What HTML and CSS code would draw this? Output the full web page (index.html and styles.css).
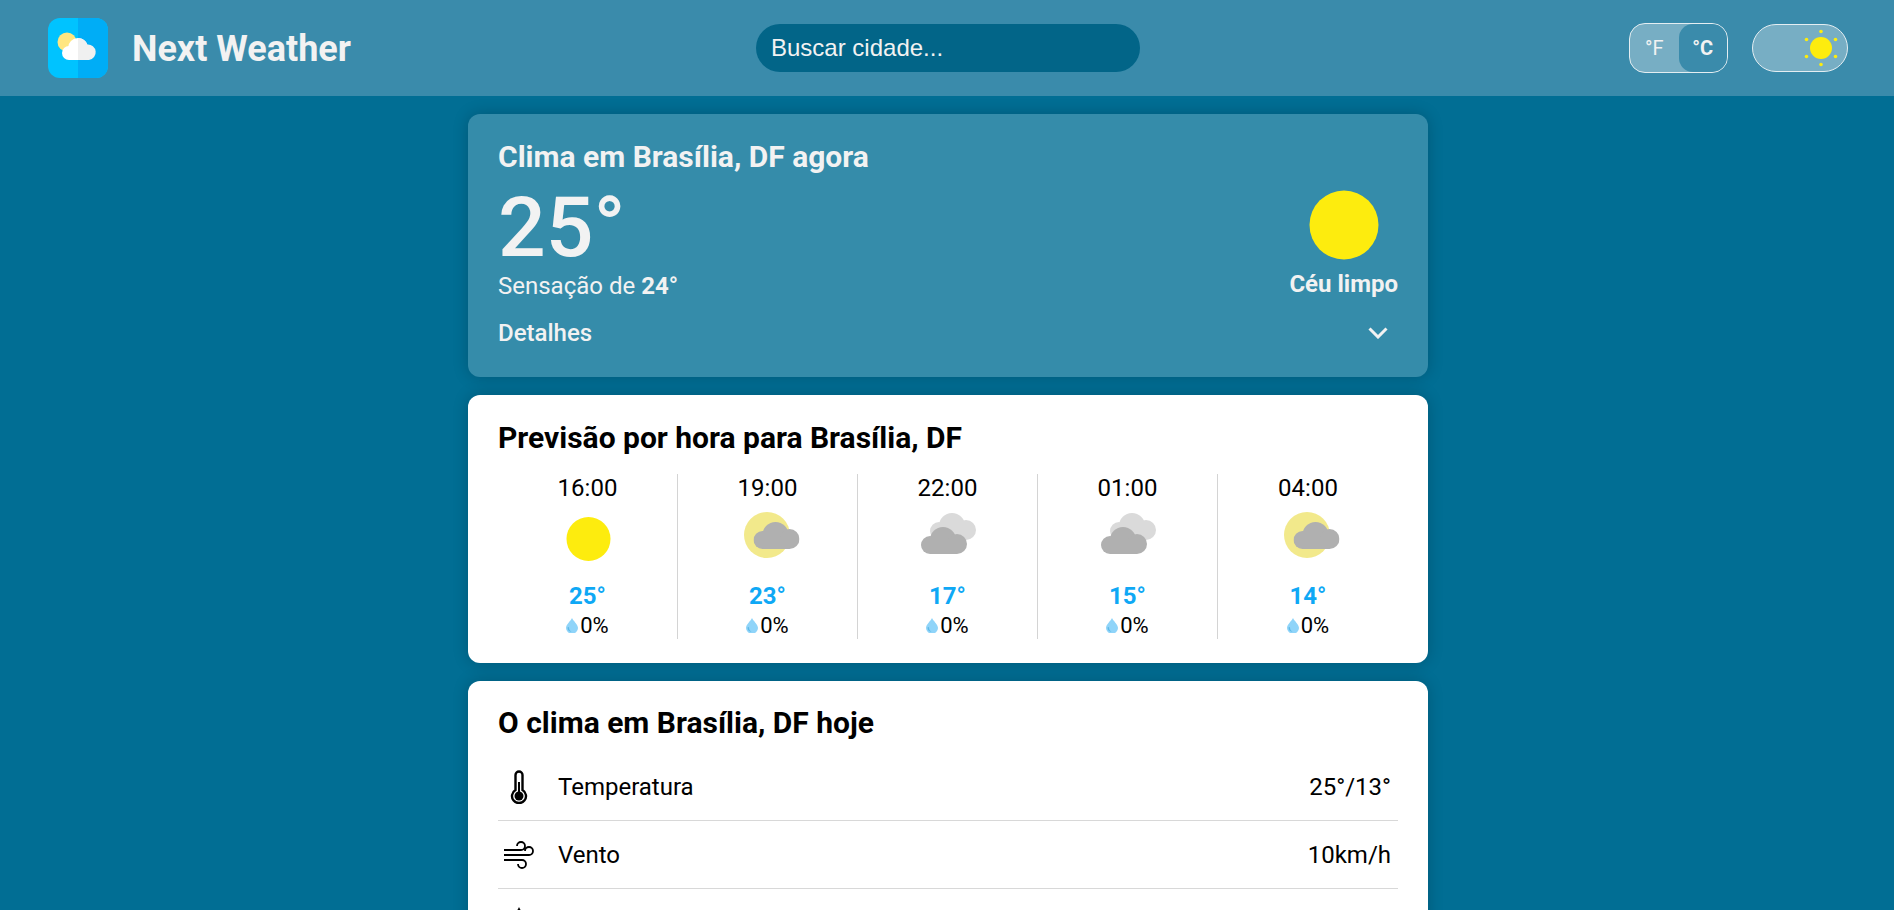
FILE: index.html
```html
<!DOCTYPE html>

<html>
<head>
<title>Next Weather</title>
<meta charset="utf-8">
<link rel="stylesheet" href="styles.css">
</head>

<body>
	<svg class="defs" width="0" height="0">
		<symbol id="cloud" viewBox="0 0 46 27">
			<circle cx="9" cy="18" r="9"/>
			<circle cx="22" cy="13" r="13"/>
			<circle cx="36" cy="17" r="10"/>
			<rect x="9" y="15" width="27" height="12"/>
		</symbol>
		<symbol id="partly" viewBox="0 0 64 64">
			<circle cx="31" cy="28" r="23" fill="#f2e98b"/>
			<use href="#cloud" x="17.500" y="15" width="46" height="27" fill="#b0b0b0"/>
		</symbol>
		<symbol id="cloudy" viewBox="0 0 64 64">
			<use href="#cloud" x="14" y="6" width="46" height="27" fill="#dadada"/>
			<use href="#cloud" x="5" y="20" width="46" height="27" fill="#b0b0b0"/>
		</symbol>
		<symbol id="drop" viewBox="0 0 12 15">
			<path d="M6 0C5 2.500 0 6.500 0 10a6 5.500 0 0 0 12 0C12 6.500 7 2.500 6 0z" fill="#8fd4f9"/>
			<path d="M1.500 9.500c0 3 2 4 4 4.200C3.500 12.500 3 11 3 9z" fill="#5fb9e6"/>
		</symbol>
	</svg>

	<header class="topbar">
		<div class="brand">
			<svg class="logo" viewBox="0 0 60 60">
				<rect width="60" height="60" rx="12" fill="#00c3ff"/>
				<path d="M30 0h18a12 12 0 0 1 12 12v36a12 12 0 0 1-12 12H30z" fill="#00adf6"/>
				<circle cx="19" cy="24" r="9.500" fill="#ffe680"/>
				<g fill="#fff">
					<circle cx="21" cy="35" r="7"/>
					<circle cx="30" cy="30" r="10"/>
					<rect x="21" y="33" width="11" height="9"/>
				</g>
				<path d="M30 20a10 10 0 0 1 9.300 6.500A7.800 7.800 0 0 1 41 42H30z" fill="#f0f0f0"/>
			</svg>
			<span class="brand-name">Next Weather</span>
		</div>
		<input class="search" type="text" placeholder="Buscar cidade...">
		<div class="controls">
			<div class="units">
				<span class="unit">°F</span>
				<span class="unit unit-on">°C</span>
			</div>
			<div class="theme">
				<svg class="theme-sun" viewBox="0 0 40 40">
					<circle cx="20" cy="20" r="11" fill="#fdec0e"/>
					<g fill="#fdec0e">
						<circle cx="20" cy="3.500" r="1.800"/>
						<circle cx="20" cy="36.500" r="1.800"/>
						<circle cx="5.500" cy="11.500" r="1.800"/>
						<circle cx="34.500" cy="11.500" r="1.800"/>
						<circle cx="5.500" cy="28.500" r="1.800"/>
						<circle cx="34.500" cy="28.500" r="1.800"/>
					</g>
				</svg>
			</div>
		</div>
	</header>

	<main class="content">
		<section class="card card-now">
			<h2 class="card-title">Clima em Brasília, DF agora</h2>
			<div class="now-body">
				<div>
					<div class="now-temp">25°</div>
					<div class="now-feels">Sensação de <b>24°</b></div>
				</div>
				<div class="now-sky">
					<svg class="now-sun" viewBox="0 0 70 70"><circle cx="35" cy="35" r="34.500" fill="#fdec0e"/></svg>
					<span>Céu limpo</span>
				</div>
			</div>
			<div class="now-details">
				<span>Detalhes</span>
				<svg class="chevron" viewBox="0 0 20 12"><path d="M1.500 1.500L10 10l8.500-8.500" fill="none" stroke="#f2f2f2" stroke-width="3"/></svg>
			</div>
		</section>

		<section class="card">
			<h2 class="card-title">Previsão por hora para Brasília, DF</h2>
			<div class="hours">
				<div class="hour">
					<div class="hour-time">16:00</div>
					<svg class="hour-icon" viewBox="0 0 64 64"><circle cx="32.500" cy="32" r="22" fill="#fdec0e"/></svg>
					<div class="hour-temp">25°</div>
					<div class="hour-rain"><svg class="drop"><use href="#drop"/></svg>0%</div>
				</div>
				<div class="hour">
					<div class="hour-time">19:00</div>
					<svg class="hour-icon"><use href="#partly"/></svg>
					<div class="hour-temp">23°</div>
					<div class="hour-rain"><svg class="drop"><use href="#drop"/></svg>0%</div>
				</div>
				<div class="hour">
					<div class="hour-time">22:00</div>
					<svg class="hour-icon"><use href="#cloudy"/></svg>
					<div class="hour-temp">17°</div>
					<div class="hour-rain"><svg class="drop"><use href="#drop"/></svg>0%</div>
				</div>
				<div class="hour">
					<div class="hour-time">01:00</div>
					<svg class="hour-icon"><use href="#cloudy"/></svg>
					<div class="hour-temp">15°</div>
					<div class="hour-rain"><svg class="drop"><use href="#drop"/></svg>0%</div>
				</div>
				<div class="hour">
					<div class="hour-time">04:00</div>
					<svg class="hour-icon"><use href="#partly"/></svg>
					<div class="hour-temp">14°</div>
					<div class="hour-rain"><svg class="drop"><use href="#drop"/></svg>0%</div>
				</div>
			</div>
		</section>

		<section class="card card-today">
			<h2 class="card-title">O clima em Brasília, DF hoje</h2>
			<div class="today">
				<div class="row">
					<svg class="row-icon" viewBox="0 0 30 34">
						<path d="M11.500 20V5a3.500 3.500 0 0 1 7 0v15a7 7 0 1 1-7 0z" fill="none" stroke="#000" stroke-width="2.400"/>
						<circle cx="15" cy="26" r="4.500"/>
						<rect x="14" y="12" width="2" height="11"/>
					</svg>
					<span class="row-label">Temperatura</span>
					<span class="row-value">25°/13°</span>
				</div>
				<div class="row">
					<svg class="row-icon" viewBox="0 0 30 34">
						<path d="M0 12h17a4 4 0 1 0-4-4M0 17h25a4 4 0 1 0-4-4M0 22h18a4 4 0 1 1-4 4" fill="none" stroke="#000" stroke-width="1.800"/>
					</svg>
					<span class="row-label">Vento</span>
					<span class="row-value">10km/h</span>
				</div>
				<div class="row">
					<svg class="row-icon" viewBox="0 0 30 34">
						<path d="M15 1C13 6 6 12 6 20a9 9 0 0 0 18 0C24 12 17 6 15 1z"/>
					</svg>
				</div>
			</div>
		</section>
	</main>
</body>

</html>
```

FILE: styles.css
```css
html, body
{
	height: 100%;
}

body
{
	margin: 0;
	overflow: hidden;
	background-color: #016e94;
	font-family: Roboto, sans-serif;
	color: #000;
}

.defs
{
	position: absolute;
}

/* top bar */
.topbar
{
	height: 96px;
	padding: 0 46px 0 48px;
	display: grid;
	grid-template-columns: 1fr 384px 1fr;
	align-items: center;
	background-color: #3a8bab;
}

.brand
{
	display: flex;
	align-items: center;
	gap: 24px;
}

.logo
{
	width: 60px;
	height: 60px;
}

.brand-name
{
	margin-top: 2px;
	font-size: 36px;
	font-weight: 700;
	color: #f2f2f2;
}

.search
{
	box-sizing: border-box;
	width: 384px;
	height: 48px;
	padding: 0 15px;
	border: none;
	border-radius: 24px;
	background-color: #026588;
	font-family: "Liberation Sans", Arial, sans-serif;
	font-size: 24px;
	color: #f2f2f2;
}

.search::placeholder
{
	color: #f2f2f2;
	opacity: 1;
}

.controls
{
	display: flex;
	justify-content: flex-end;
	align-items: center;
	gap: 24px;
}

.units
{
	box-sizing: border-box;
	width: 99px;
	height: 50px;
	display: flex;
	border: 1px solid #e4eef2;
	border-radius: 16px;
	overflow: hidden;
	background-color: #77aec4;
	font-size: 20px;
	color: #f2f2f2;
}

.unit
{
	flex: 1;
	display: flex;
	align-items: center;
	justify-content: center;
}

.unit-on
{
	border-radius: 14px;
	background-color: #3a8bab;
	font-weight: 700;
}

.theme
{
	box-sizing: border-box;
	width: 96px;
	height: 48px;
	display: flex;
	justify-content: flex-end;
	align-items: center;
	border: 1px solid #e4eef2;
	border-radius: 24px;
	background-color: #77aec4;
}

.theme-sun
{
	width: 40px;
	height: 40px;
	margin-right: 6px;
}

/* cards */
.content
{
	width: 960px;
	margin: 18px auto 0;
	padding-left: 2px;
	display: flex;
	flex-direction: column;
	gap: 18px;
}

.card
{
	padding: 25px 30px 24px;
	border-radius: 12px;
	background-color: #fff;
	box-shadow: 0 0 16px rgba(0, 0, 0, .2);
}

.card-title
{
	margin: 0;
	font-size: 30px;
	line-height: 36px;
	font-weight: 700;
}

.card-now
{
	padding-bottom: 31px;
	background-color: #358caa;
	color: #f2f2f2;
}

.card-today
{
	padding-top: 24px;
}

.now-body
{
	margin-top: 7px;
	display: flex;
	justify-content: space-between;
	align-items: flex-start;
}

.now-temp
{
	font-size: 84px;
	line-height: 91px;
	font-weight: 500;
}

.now-feels
{
	font-size: 24px;
	line-height: 26px;
}

.now-sky
{
	display: flex;
	flex-direction: column;
	align-items: center;
	font-size: 24px;
	line-height: 28px;
	font-weight: 700;
}

.now-sun
{
	width: 70px;
	height: 70px;
	margin: 8px 0 10px;
}

.now-details
{
	margin-top: 21px;
	padding-right: 10px;
	display: flex;
	justify-content: space-between;
	align-items: center;
	font-size: 24px;
	font-weight: 500;
	line-height: 26px;
}

.chevron
{
	width: 20px;
	height: 12px;
}

/* hourly forecast */
.hours
{
	margin-top: 18px;
	display: grid;
	grid-template-columns: repeat(5, 1fr);
}

.hour
{
	display: flex;
	flex-direction: column;
	align-items: center;
	border-right: 1px solid #d4d4d4;
}

.hour:last-child
{
	border-right: none;
}

.hour-time
{
	font-size: 24px;
	line-height: 28px;
}

.hour-icon
{
	width: 64px;
	height: 64px;
	margin: 5px 0 12px;
}

.hour-temp
{
	font-size: 24px;
	line-height: 26px;
	font-weight: 700;
	color: #0fa8f5;
}

.hour-rain
{
	margin-top: 3px;
	display: flex;
	align-items: center;
	gap: 2px;
	font-size: 22px;
	line-height: 27px;
}

.drop
{
	width: 12px;
	height: 15px;
}

/* today list */
.today
{
	margin-top: 12px;
}

.row
{
	box-sizing: border-box;
	height: 68px;
	display: flex;
	align-items: center;
	border-bottom: 1px solid #d8d8d8;
	font-size: 24px;
}

.row-icon
{
	width: 30px;
	height: 34px;
	margin: 0 24px 0 6px;
}

.row-label
{
	flex: 1;
}

.row-value
{
	padding-right: 7px;
}
```
